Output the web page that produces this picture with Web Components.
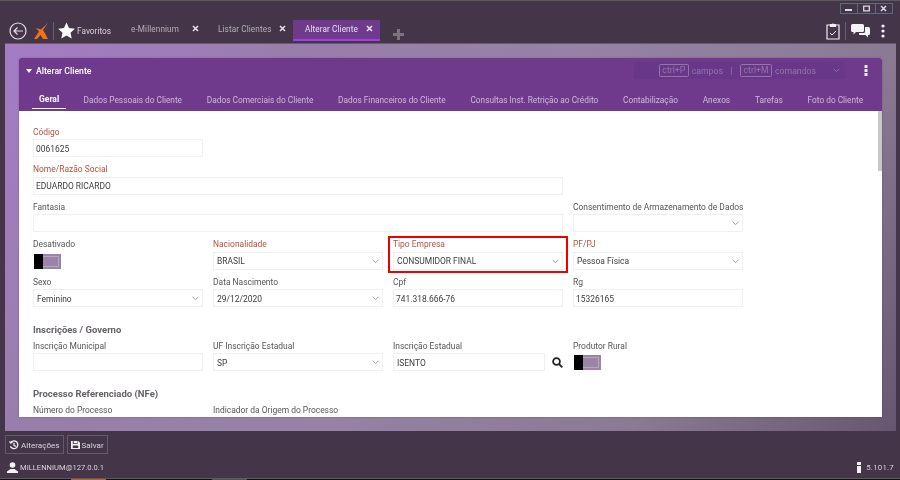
<!DOCTYPE html>
<html lang="pt-BR">
<head>
<meta charset="utf-8">
<title>Alterar Cliente</title>
<style>
  html, body { margin: 0; height: 100%; background: #443548; overflow: hidden; }
  body { font: 8.7px Roboto, "Open Sans", "Liberation Sans", sans-serif; }
</style>
</head>
<body>
<app-shell>
  <top-bar slot="top">
    <win-tab>e-Millennium</win-tab>
    <win-tab>Listar Clientes</win-tab>
    <win-tab active>Alterar Cliente</win-tab>
  </top-bar>

  <form-card slot="main">
    <form-tab active>Geral</form-tab>
    <form-tab>Dados Pessoais do Cliente</form-tab>
    <form-tab>Dados Comerciais do Cliente</form-tab>
    <form-tab>Dados Financeiros do Cliente</form-tab>
    <form-tab>Consultas Inst. Retrição ao Crédito</form-tab>
    <form-tab>Contabilização</form-tab>
    <form-tab>Anexos</form-tab>
    <form-tab>Tarefas</form-tab>
    <form-tab>Foto do Cliente</form-tab>

    <form-grid slot="body">
      <form-field label="Código" value="0061625" required></form-field>
      <form-field label="Nome/Razão Social" value="EDUARDO RICARDO" required style="grid-column: 1 / span 3"></form-field>
      <form-field label="Fantasia" style="grid-column: 1 / span 3"></form-field>
      <form-field label="Consentimento de Armazenamento de Dados" select></form-field>
      <form-field label="Desativado" toggle style="grid-column: 1"></form-field>
      <form-field label="Nacionalidade" value="BRASIL" required select></form-field>
      <form-field label="Tipo Empresa" value="CONSUMIDOR FINAL" required select marked></form-field>
      <form-field label="PF/PJ" value="Pessoa Física" required select></form-field>
      <form-field label="Sexo" value="Feminino" select></form-field>
      <form-field label="Data Nascimento" value="29/12/2020" select></form-field>
      <form-field label="Cpf" value="741.318.666-76"></form-field>
      <form-field label="Rg" value="15326165"></form-field>
    </form-grid>

    <section-title slot="body">Inscrições / Governo</section-title>
    <form-grid slot="body">
      <form-field label="Inscrição Municipal"></form-field>
      <form-field label="UF Inscrição Estadual" value="SP" select></form-field>
      <form-field label="Inscrição Estadual" value="ISENTO" search></form-field>
      <form-field label="Produtor Rural" toggle></form-field>
    </form-grid>

    <section-title slot="body">Processo Referenciado (NFe)</section-title>
    <form-grid slot="body">
      <form-field label="Número do Processo"></form-field>
      <form-field label="Indicador da Origem do Processo" select></form-field>
    </form-grid>
  </form-card>

  <bottom-bar slot="bottom"></bottom-bar>
</app-shell>

<script>
const define = (name, css, html) => {
  customElements.define(name, class extends HTMLElement {
    constructor() {
      super();
      this.attachShadow({ mode: 'open' }).innerHTML = `<style>${css}</style>${html}`;
    }
  });
};

define('app-shell', `
  :host { display: flex; flex-direction: column; width: 900px; height: 480px; background: #443548; border-top: 1px solid #5a5a5a; box-sizing: border-box; filter: blur(.4px); }
  .main { height: 388px; margin: 0 4px 0 5px; padding: 14px 14px 14px; box-sizing: border-box; display: flex;
    background: linear-gradient(125deg, #a47cc6 0%, #987eab 25%, #9582a5 50%, #8b7a94 77%, #67566f 100%); border-top: 1px solid #6a5a70; }
  .shade { flex: 1; display: flex; min-width: 0; }
`, `
  <slot name="top"></slot>
  <div class="main"><div class="shade"><slot name="main"></slot></div></div>
  <slot name="bottom"></slot>
`);

define('top-bar', `
  :host { display: block; height: 42px; position: relative; color: #fff; flex: none; }
  .row { display: flex; align-items: flex-end; height: 40px; padding-left: 9px; }
  .lead { display: flex; align-items: center; height: 21px; }
  .lead svg { display: block; }
  .sep { width: 1px; height: 18px; background: #6b5e70; margin: 0 4px 0 5px; }
  .fav { margin: 0 8px 0 2px; color: #d8d3da; width: 34px; white-space: nowrap; font-size: 8.3px; }
  .tabs { display: flex; align-items: flex-end; }
  .plus { margin: 0 0 1.5px 13px; }
  .win { position: absolute; top: 2px; right: 7px; display: flex; border: 1px solid #5b6a80; height: 9px; }
  .win span { width: 16.5px; display: flex; align-items: center; justify-content: center; border-left: 1px solid #5b6a80; }
  .win span:first-child { border: 0; }
  .tools { position: absolute; top: 21px; right: 15px; display: flex; align-items: center; gap: 5px; }
  .tools i { width: 1px; height: 18px; background: #6b5e70; }
`, `
  <div class="row">
    <div class="lead">
      <svg width="18" height="18" viewBox="0 0 18 18" fill="none" stroke="#e4e0e6" stroke-width="1.2"><circle cx="9" cy="9" r="8"/><path d="M14 9H5M8.5 5.5 5 9l3.5 3.5"/></svg>
      <svg style="margin-left:7px" width="14" height="16" viewBox="0 0 14 16"><path fill="#ef7418" d="M14 0 9 7l1.500 2.500L14 16H9L6.500 12 3 16H0l5-7.500L2 5l5 1.500z"/></svg>
      <span class="sep"></span>
      <svg width="17" height="17" viewBox="0 0 24 24"><path fill="#fff" d="m12 .8 3.500 7.600 8.300 1-6.100 5.600 1.600 8.200-7.300-4.100-7.300 4.100 1.600-8.200L.2 9.400l8.300-1z"/></svg>
      <span class="fav">Favoritos</span>
    </div>
    <div class="tabs"><slot></slot></div>
    <svg class="plus" width="11" height="11" viewBox="0 0 11 11"><path fill="#7d7480" d="M4 0h3v4h4v3H7v4H4V7H0V4h4z"/></svg>
  </div>
  <div class="win">
    <span><svg width="7" height="7"><path fill="#dcdce4" d="M0 4h7v2H0z"/></svg></span>
    <span><svg width="7" height="7"><path fill="none" stroke="#dcdce4" stroke-width="1.3" d="M.7 1.200h5.600v4.600H.7z"/></svg></span>
    <span><svg width="7" height="7"><path stroke="#dcdce4" stroke-width="1.500" d="m1 1 5 5M6 1 1 6"/></svg></span>
  </div>
  <div class="tools">
    <svg width="14" height="18" viewBox="0 0 14 18" fill="none" stroke="#f1eef2" stroke-width="1.200"><path d="M4 3H1v14h12V3h-3"/><path fill="#f1eef2" d="M4.500 4.500V2.600h1.600a1 1 0 0 1 1.800 0h1.600v1.900z"/><path stroke-width="1" d="m4 11 2 2 4-4"/></svg>
    <i></i>
    <svg width="19" height="14" viewBox="0 0 19 14" fill="#f5f3f6"><path d="M1.500 0h10A1.500 1.500 0 0 1 13 1.500v5A1.500 1.500 0 0 1 11.500 8H5L2.500 10.500V8h-1A1.500 1.500 0 0 1 0 6.500v-5A1.500 1.500 0 0 1 1.500 0z"/><path d="M14 3h3.500A1.500 1.500 0 0 1 19 4.500v5a1.500 1.500 0 0 1-1.500 1.500H17v2.500L14.500 11H9a1 1 0 0 1-1-1V9h4.500A1.500 1.500 0 0 0 14 7.500z"/></svg>
    <svg style="margin-left:6px" width="4" height="14" viewBox="0 0 4 14" fill="#f5f3f6"><circle cx="2" cy="2" r="1.600"/><circle cx="2" cy="7" r="1.600"/><circle cx="2" cy="12" r="1.600"/></svg>
  </div>
`);

define('win-tab', `
  :host { display: flex; align-items: center; justify-content: space-between; width: 87px; height: 21px; padding: 0 7px 4px 12px; box-sizing: border-box; color: #b5aeb8; letter-spacing: .1px; font-size: 8.2px; }
  :host([active]) { background: #6f3a8c; color: #e8e2ec; border-bottom: 2px solid #a63bea; padding-bottom: 2px; }
`, `<span><slot></slot></span><svg width="7" height="7"><path stroke="#e4e0e6" stroke-width="1.600" d="m1 1 5 5M6 1 1 6"/></svg>`);

define('form-card', `
  :host { flex: 1; display: flex; flex-direction: column; min-width: 0; border-radius: 2px 2px 0 0; overflow: hidden; background: #fff; box-shadow: 0 0 2px rgba(60,40,70,.4); }
  header { background: #6f3a8c; height: 53px; flex: none; color: #d9cde0; display: flex; flex-direction: column; box-sizing: border-box; }
  .head { display: flex; align-items: center; height: 21px; margin-top: 2px; padding: 0 14px 0 7px; }
  .tri { width: 0; height: 0; border: 3px solid transparent; border-top: 4px solid #fff; border-bottom: 0; margin-right: 4px; }
  .name { color: #fff; font-weight: 500; flex: 1; }
  .cmd { width: 211px; height: 17px; background: #69378a; display: flex; align-items: center; justify-content: flex-end; box-sizing: border-box; color: #9276a6; gap: 3px; margin-right: 19px; padding-right: 5px; }
  .cmd b { font-weight: 400; border: 1px solid #9276a6; border-radius: 1.5px; padding: 0 2.5px; line-height: 11px; }
  .cmd .bar { margin: 0 4.5px; }
  .cmd svg { margin: 0 0 0 14px; }
  .tabs { display: flex; margin-top: 8px; padding-left: 13px; align-items: stretch; height: 22px; }
  .body { flex: 1; padding: 13.5px 14px 0; overflow: hidden; position: relative; min-height: 0; color: #555; }
  .thumb { position: absolute; top: 0; right: 0; width: 4px; height: 60px; background: #c8c8c8; }
`, `
  <header>
    <div class="head">
      <span class="tri"></span><span class="name">Alterar Cliente</span>
      <div class="cmd"><b>ctrl+P</b><span>campos</span><span class="bar">|</span><b>ctrl+M</b><span>comandos</span>
        <svg width="7" height="5" viewBox="0 0 7 5" fill="none" stroke="#8d70a2"><path d="m.7.8 2.800 2.800L6.300.8"/></svg></div>
      <svg width="4" height="11" viewBox="0 0 4 11" fill="#efe8f3"><rect x=".5" width="3" height="3"/><rect x=".5" y="4" width="3" height="3"/><rect x=".5" y="8" width="3" height="3"/></svg>
    </div>
    <nav class="tabs"><slot></slot></nav>
  </header>
  <div class="body"><slot name="body"></slot><span class="thumb"></span></div>
`);

define('form-tab', `
  :host { display: flex; align-items: center; padding: 1px 12.4px 0; box-sizing: border-box; color: #cbbad6; white-space: nowrap; height: 20px; font-size: 8.3px; }
  :host([active]) { color: #fff; font-weight: 700; font-size: 8.5px; padding: 1px 7px 0; border-bottom: 1px solid #fff; margin-right: 5px; }
`, `<span><slot></slot></span>`);

define('form-grid', `
  :host { display: grid; grid-template-columns: repeat(4, 170px); column-gap: 10px; grid-auto-rows: 37.5px; }
`, `<slot></slot>`);

define('section-title', `
  :host { display: block; height: 14px; line-height: 15px; font-weight: 700; font-size: 9.5px; color: #666069; margin: 10px 0 2.5px; }
`, `<slot></slot>`);

customElements.define('form-field', class extends HTMLElement {
  constructor() {
    super();
    const label = this.getAttribute('label') || '';
    const value = this.getAttribute('value') || '';
    let control;
    if (this.hasAttribute('toggle')) {
      control = `<div class="toggle"><i></i><u></u></div>`;
    } else {
      const chevron = this.hasAttribute('select')
        ? `<svg width="7" height="5" viewBox="0 0 7 5" fill="none" stroke="#999"><path d="m.6.8 2.900 2.900L6.400.8"/></svg>` : '';
      control = `<div class="box"><span>${value}</span>${chevron}</div>`;
      if (this.hasAttribute('search')) {
        control = `<div class="wrap">${control}<svg width="11" height="11" viewBox="0 0 11 11" fill="none" stroke="#222" stroke-width="1.800"><circle cx="4.500" cy="4.500" r="3.400"/><path d="m7 7 3.300 3.300"/></svg></div>`;
      }
    }
    this.attachShadow({ mode: 'open' }).innerHTML = `<style>
      :host { display: block; position: relative; min-width: 0; color: #555; font-size: 8.45px; }
      :host([required]) label { color: #b4513f; }
      label { display: block; height: 14.5px; line-height: 14px; white-space: nowrap; }
      .box { height: 18px; box-sizing: border-box; border: 1px solid #f0f0f0; display: flex; align-items: center; justify-content: space-between; padding: 1px 6px 0 2px; color: #3c3c3c; background: #fff; }
      :host([select]) .box { padding-left: 3px; padding-right: 3px; }
      .wrap { display: flex; align-items: center; gap: 7px; }
      .wrap .box { width: 152px; padding-left: 3px; }
      .toggle { width: 27px; height: 15px; margin: 2px 0 0 1px; display: flex; background: #9b84a6; box-sizing: border-box; }
      .toggle i { width: 9px; background: #000; flex: none; }
      .toggle u { flex: 1; margin: 2px 2px 2px 0; border: 1px solid #b7a7bd; border-left: 0; background: #9b84a6; }
      :host([marked]) .mark { position: absolute; left: -5px; right: -5px; top: -1px; height: 37px; border: 2px solid #ee0000; box-sizing: border-box; pointer-events: none; }
    </style><label>${label}</label>${control}<div class="mark"></div>`;
  }
});

define('bottom-bar', `
  :host { display: flex; flex-direction: column; flex: 1; color: #d8d3da; }
  .btns { display: flex; gap: 3px; padding: 4px 0 0 5px; }
  .btn { display: flex; align-items: center; gap: 2px; height: 19px; padding: 0 3px; box-sizing: border-box; border: 1px solid #655a6b; color: #d9d5dc; font-size: 8.1px; }
  .foot { display: flex; justify-content: space-between; align-items: center; padding: 8px 6px 0 7px; }
  .foot div { display: flex; align-items: center; gap: 2px; font-size: 7.6px; }
  .foot div + div { letter-spacing: .25px; font-size: 7.8px; }
  .strip { margin-top: auto; height: 1px; border-top: 1px solid #5f5a62; background: #111; display: flex; }
  .strip span { height: 1px; }
  .strip .app { width: 35px; margin-left: 71px; background: #b5652a; }
  .strip .other { width: 35px; margin-left: 106px; background: #55505a; }
`, `
  <div class="btns">
    <div class="btn"><svg width="10" height="10" viewBox="0 0 11 11" fill="none" stroke="#f2f0f3" stroke-width="1.400"><path d="M2 2.500A4.300 4.300 0 1 1 1.500 7"/><path d="M.5 1.500 2 3.500 4 2M5.500 3v3l2 1"/></svg>Alterações</div>
    <div class="btn"><svg width="9" height="9" viewBox="0 0 10 10" fill="#f2f0f3"><path d="M0 1h8l2 2v7H0z"/><path fill="#443548" d="M2 1h1v2.500h4V1h.5v3.500H2zM2 6h6v3H2z"/></svg>Salvar</div>
  </div>
  <div class="foot">
    <div><svg width="11" height="11" viewBox="0 0 11 11" fill="#f4f2f5"><circle cx="5.500" cy="3" r="2.800"/><path d="M0 11V9.500L3.500 7h4L11 9.500V11z"/></svg>MILLENNIUM@127.0.0.1</div>
    <div><svg width="4" height="11" viewBox="0 0 4 11" fill="#f4f2f5" style="margin-right:3px"><rect width="4" height="3"/><rect y="4" width="4" height="7"/></svg>5.101.7</div>
  </div>
  <div class="strip"><span class="app"></span><span class="other"></span></div>
`);
</script>
</body>
</html>
